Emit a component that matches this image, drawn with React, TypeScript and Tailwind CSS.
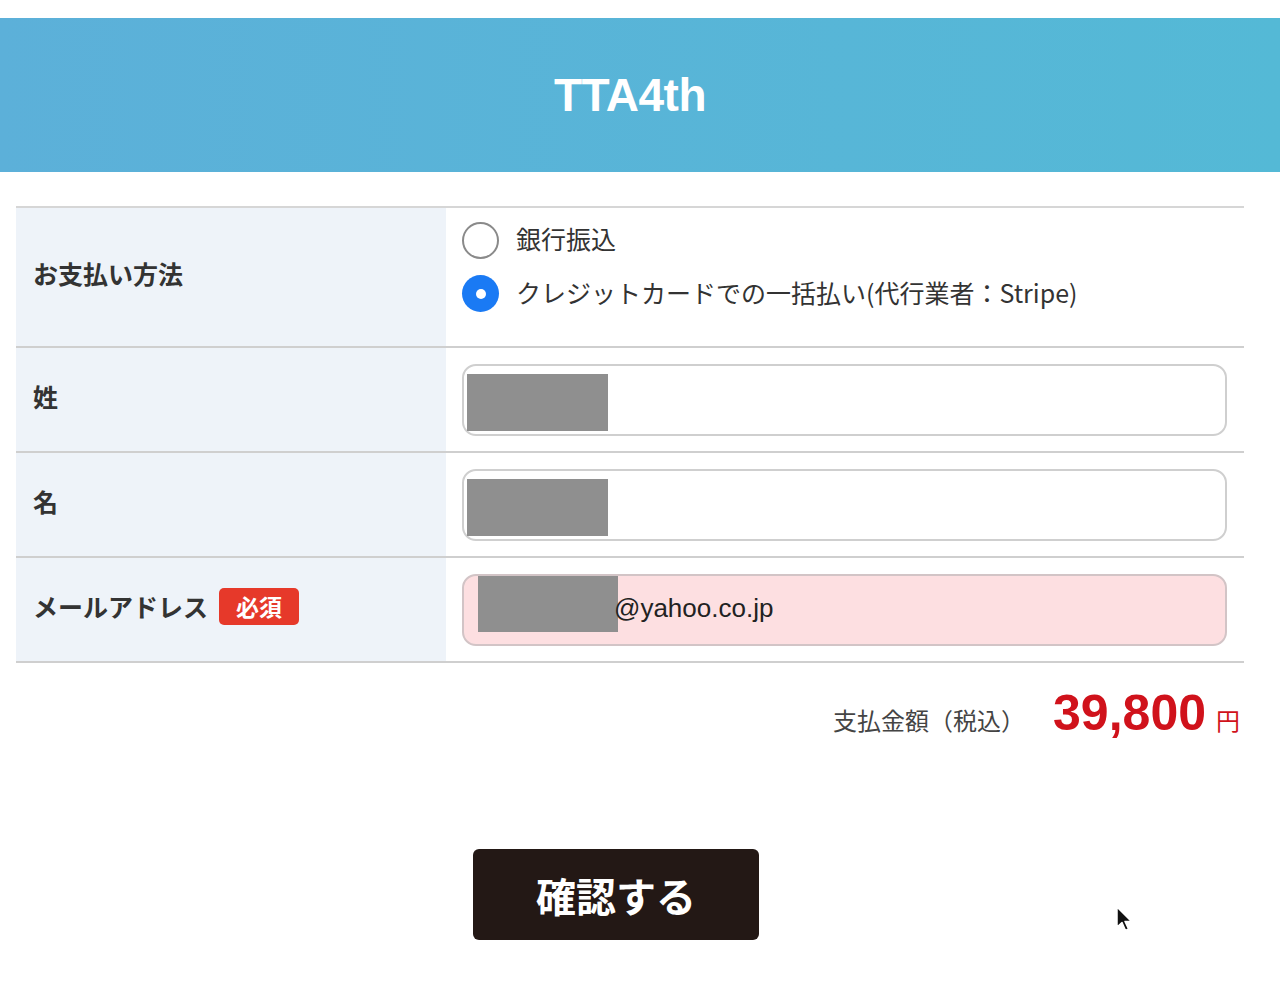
import React from "react";

const jp = "font-['Noto_Sans_CJK_JP','Noto_Sans',sans-serif]";

function Label({ children }: { children: React.ReactNode }) {
  return (
    <div className="flex items-center bg-[#eef3f9] pb-[6px] pl-[17px]">
      {children}
    </div>
  );
}

function Radio({ checked, label }: { checked?: boolean; label: string }) {
  return (
    <label className="flex items-center gap-[17px]">
      {checked ? (
        <span className="flex h-[37px] w-[37px] items-center justify-center rounded-full bg-[#1a7af4]">
          <span className="h-[10px] w-[10px] rounded-full bg-white" />
        </span>
      ) : (
        <span className="h-[37px] w-[37px] rounded-full border-2 border-[#8a8a8a] bg-white" />
      )}
      <span className="pb-[3px] text-[25px] text-[#333]">{label}</span>
    </label>
  );
}

function NameInput() {
  return (
    <div className="h-[72px] w-full rounded-[14px] border-2 border-[#cfcfcf] bg-white pl-[3px] pt-[8px]">
      <div className="h-[57px] w-[141px] bg-[#8f8f8f]" />
    </div>
  );
}

export default function App() {
  return (
    <div className={`relative h-[988px] w-[1280px] overflow-hidden bg-white ${jp}`}>
      {/* Header */}
      <div className="pt-[18px]">
        <div className="flex h-[154px] items-center justify-center bg-gradient-to-r from-[#5cb0d9] to-[#54b9d6] pr-[20px]">
          <h1 className="font-['Liberation_Sans',sans-serif] text-[46px] font-bold tracking-[-0.5px] text-white">
            TTA4th
          </h1>
        </div>
      </div>

      {/* Form table */}
      <div className="ml-[16px] mr-[36px] mt-[34px] border-t-2 border-[#d6d6d6]">
        {/* Payment */}
        <div className="grid h-[140px] grid-cols-[430px_1fr] border-b-2 border-[#cfcfcf]">
          <Label>
            <span className="text-[25px] font-bold text-[#333]">お支払い方法</span>
          </Label>
          <div className="flex flex-col gap-[13px] pl-[16px] pt-[12px]">
            <Radio label="銀行振込" />
            <Radio checked label="クレジットカードでの一括払い(代行業者：Stripe)" />
          </div>
        </div>

        {/* Last name */}
        <div className="grid h-[105px] grid-cols-[430px_1fr] border-b-2 border-[#cfcfcf]">
          <Label>
            <span className="text-[25px] font-bold text-[#333]">姓</span>
          </Label>
          <div className="flex items-center pl-[16px] pr-[17px]">
            <NameInput />
          </div>
        </div>

        {/* First name */}
        <div className="grid h-[105px] grid-cols-[430px_1fr] border-b-2 border-[#cfcfcf]">
          <Label>
            <span className="text-[25px] font-bold text-[#333]">名</span>
          </Label>
          <div className="flex items-center pl-[16px] pr-[17px]">
            <NameInput />
          </div>
        </div>

        {/* Email */}
        <div className="grid h-[105px] grid-cols-[430px_1fr] border-b-2 border-[#cfcfcf]">
          <Label>
            <span className="text-[25px] font-bold text-[#333]">メールアドレス</span>
            <span className="ml-[11px] rounded-[5px] bg-[#e6392a] px-[17px] py-[1px] text-[23px] font-bold text-white">
              必須
            </span>
          </Label>
          <div className="flex items-center pl-[16px] pr-[17px]">
            <div className="flex h-[72px] w-full rounded-[14px] border-2 border-[#d2c4c6] bg-[#fddfe1]">
              <div className="ml-[14px] h-[56px] w-[140px] shrink-0 bg-[#8f8f8f]" />
              <span className="ml-[-4px] mt-[13px] font-['Liberation_Sans',sans-serif] text-[26px] text-[#222]">
                @yahoo.co.jp
              </span>
            </div>
          </div>
        </div>
      </div>

      {/* Total */}
      <div className="mt-[13px] flex items-baseline justify-end pr-[40px]">
        <span className="text-[24px] text-[#444]">支払金額（税込）</span>
        <span className="ml-[28px] font-['Liberation_Sans',sans-serif] text-[50px] font-bold text-[#d0121b]">
          39,800
        </span>
        <span className="ml-[10px] text-[24px] text-[#d0121b]">円</span>
      </div>

      {/* Submit */}
      <div className="mt-[98px] flex justify-center pr-[48px]">
        <button className="flex h-[91px] w-[286px] items-center justify-center rounded-[6px] bg-[#231815] text-[40px] font-bold text-white">
          確認する
        </button>
      </div>

      {/* Mouse pointer */}
      <svg
        className="absolute left-[1115px] top-[906px]"
        width="20"
        height="28"
        viewBox="0 0 20 28"
      >
        <path
          d="M2 1 L2 21 L7 16.5 L10.5 24.5 L13.5 23 L10 15.5 L16.5 15.5 Z"
          fill="#111"
          stroke="#fff"
          strokeWidth="1.5"
          strokeLinejoin="round"
        />
      </svg>
    </div>
  );
}
